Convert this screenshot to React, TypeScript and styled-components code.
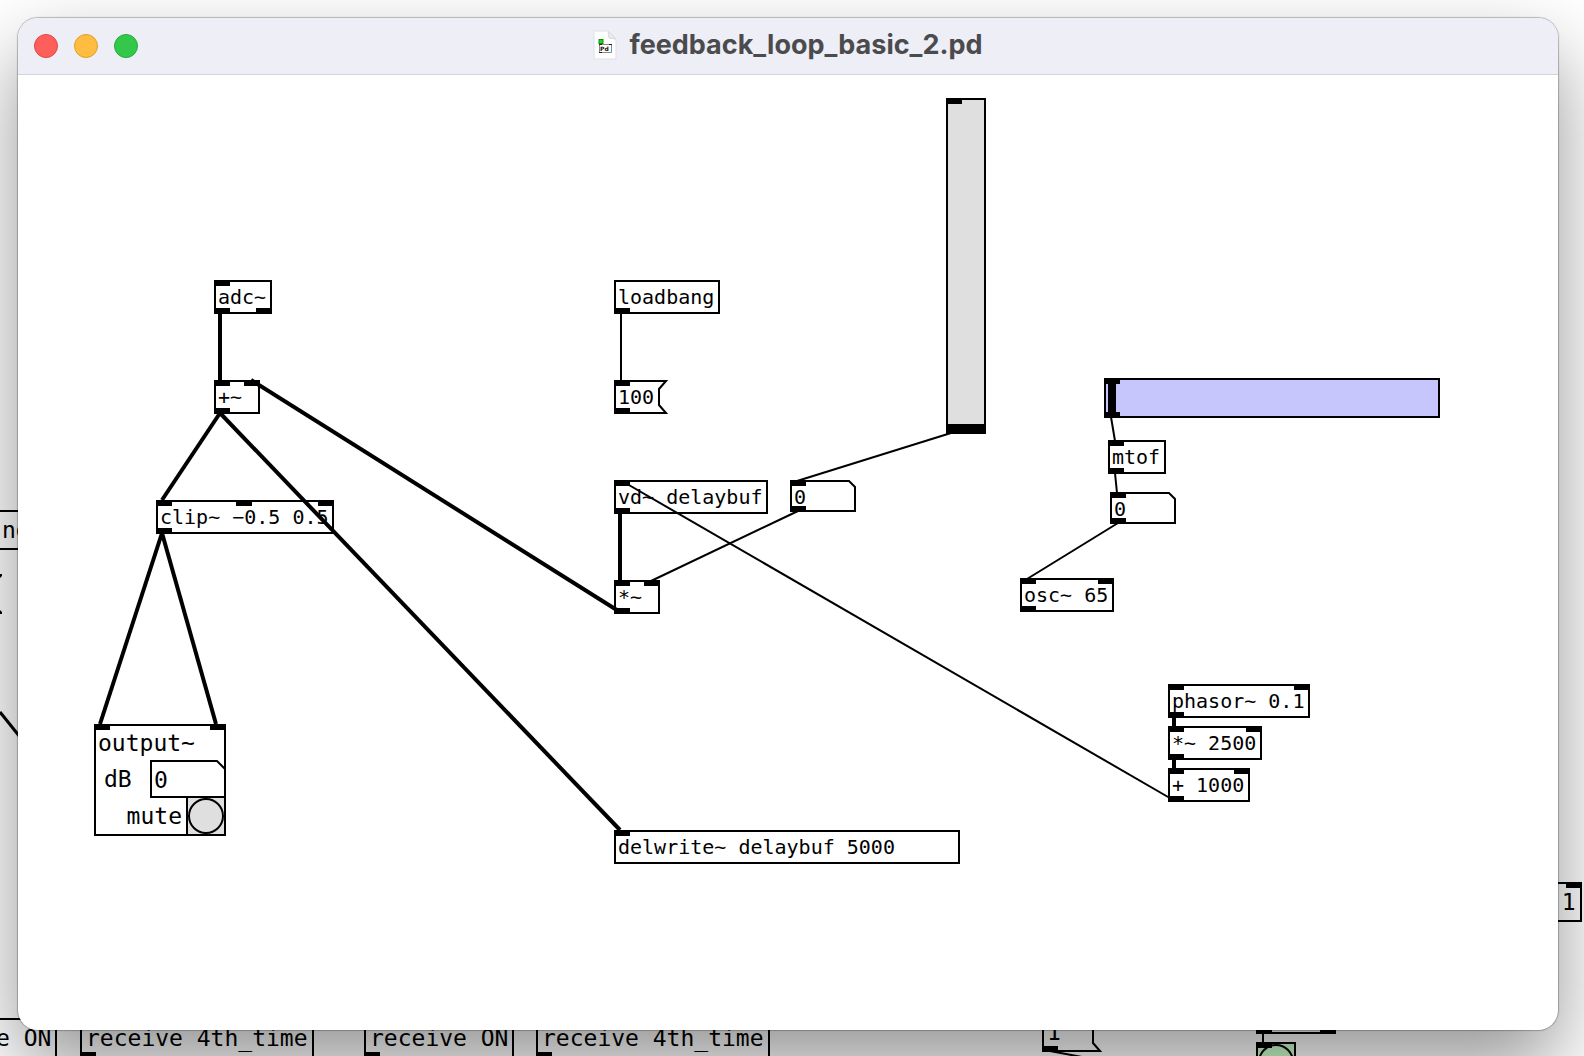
import React from 'react';
import styled, { createGlobalStyle, css } from 'styled-components';

const GlobalStyle = createGlobalStyle`
  *, *::before, *::after { box-sizing: border-box; }
  body { margin: 0; background: #fff; }
  button, input { margin: 0; padding: 0; border: 0; border-radius: 0; background: none; color: inherit; font: inherit; }
`;

const MONO = '"DejaVu Sans Mono", "Liberation Mono", monospace';

type Place = { x: number; y: number };
type Size = { w: number; h: number };

const placed = css<{ $x: number; $y: number }>`
  position: absolute;
  left: ${(p) => p.$x}px;
  top: ${(p) => p.$y}px;
`;

const Desktop = styled.div`
  position: relative;
  display: flex;
  min-height: 100vh;
  padding: 18px 26px 26px 18px;
  overflow: hidden;
  background: #fff;
  color: #000;
  font-family: ${MONO};
  font-size: 23px;
  line-height: 36px;
`;

const Backdrop = styled.div`
  position: absolute;
  inset: 0;
  overflow: hidden;
`;

const Window = styled.main`
  position: relative;
  flex: 1;
  display: flex;
  flex-direction: column;
  border-radius: 20px;
  background: #fff;
  box-shadow: 0 0 1px 1px rgba(0, 0, 0, 0.25), 0 36px 80px rgba(0, 0, 0, 0.42);
  overflow: hidden;
`;

const TitleBar = styled.header`
  display: grid;
  grid-template-columns: 1fr auto 1fr;
  align-items: center;
  height: 57px;
  padding: 0 16px;
  border-bottom: 1px solid #d4d4d9;
  background: #eeeef7;
`;

const Lights = styled.div`
  display: flex;
  gap: 16px;
`;

const Light = styled.button<{ $fill: string; $edge: string }>`
  width: 24px;
  height: 24px;
  border: 1px solid ${(p) => p.$edge};
  border-radius: 50%;
  background: ${(p) => p.$fill};
`;

const Title = styled.h1`
  display: flex;
  align-items: center;
  gap: 12px;
  margin: 0;
  padding-bottom: 2px;
  color: #4b4b4d;
  font: 700 27px/32px Inter, "Liberation Sans", sans-serif;
`;

const Canvas = styled.section`
  position: relative;
  flex: 1;
  font-size: 20px;
  line-height: 30px;
`;

const Cords = styled.svg`
  position: absolute;
  inset: 0;
  width: 100%;
  height: 100%;
  pointer-events: none;
`;

const ObjectBox = styled.div<{ $x: number; $y: number; $w: number; $large?: boolean }>`
  ${placed}
  width: ${(p) => p.$w}px;
  height: ${(p) => (p.$large ? 40 : 34)}px;
  padding: 0 ${(p) => (p.$large ? 4 : 2)}px;
  border: 2px solid #000;
  white-space: pre;
`;

const Port = styled.i<{ $x: number; $bottom?: boolean }>`
  position: absolute;
  left: ${(p) => p.$x}px;
  ${(p) => (p.$bottom ? 'bottom: 0;' : 'top: 0;')}
  width: 16px;
  height: 6px;
  background: #000;
  pointer-events: none;
`;

/* Ports of a bordered box hang on this frame, which covers the border too. */
const PortFrame = styled.span`
  position: absolute;
  inset: -2px;
  pointer-events: none;
`;

const Outline = styled.svg`
  position: absolute;
  inset: 0;
  width: 100%;
  height: 100%;
  fill: none;
  stroke: #000;
  stroke-width: 2;
  pointer-events: none;
`;

const Message = styled.button<{ $x: number; $y: number; $w: number }>`
  ${placed}
  width: ${(p) => p.$w}px;
  height: 34px;
  padding: 2px 0 2px 4px;
  text-align: left;
  line-height: 30px;
`;

const NumberFrame = styled.span<{ $w: number; $h: number }>`
  position: relative;
  display: block;
  width: ${(p) => p.$w}px;
  height: ${(p) => p.$h}px;
`;

const NumberInput = styled.input`
  display: block;
  width: 100%;
  height: 100%;
  padding: 2px 8px 0 4px;
  outline: none;
`;

const Placed = styled.div<{ $x: number; $y: number }>`
  ${placed}
`;

const SliderFrame = styled.div<{ $x: number; $y: number; $w: number; $h: number; $fill: string }>`
  ${placed}
  width: ${(p) => p.$w}px;
  height: ${(p) => p.$h}px;
  border: 2px solid #000;
  background: ${(p) => p.$fill};
`;

const Range = styled.input<{ $vertical?: boolean }>`
  display: block;
  width: 100%;
  height: 100%;
  appearance: none;
  outline: none;
  ${(p) => (p.$vertical ? 'writing-mode: vertical-lr; direction: rtl;' : 'padding: 0 2px;')}

  &::-webkit-slider-thumb {
    appearance: none;
    width: ${(p) => (p.$vertical ? 36 : 8)}px;
    height: ${(p) => (p.$vertical ? 8 : 36)}px;
    border: 0;
    border-radius: 0;
    background: #000;
  }
`;

const OutputBox = styled.div<{ $x: number; $y: number }>`
  ${placed}
  display: flex;
  flex-direction: column;
  width: 132px;
  font-size: 23px;

  &::after {
    content: '';
    position: absolute;
    inset: 0;
    border: 2px solid #000;
    pointer-events: none;
  }
`;

const OutputName = styled.div`
  height: 36px;
  padding: 2px 0 0 4px;
  line-height: 34px;
`;

const OutputLevel = styled.div`
  display: flex;
  justify-content: space-between;
  height: 36px;
  padding-left: 10px;
  line-height: 38px;
`;

const OutputMute = styled.div`
  display: flex;
  justify-content: flex-end;
  gap: 4px;
  height: 40px;
  line-height: 40px;
`;

const Bang = styled.button<{ $fill: string }>`
  display: block;
  width: 40px;
  height: 40px;
  border: 2px solid #000;
  background: ${(p) => p.$fill};

  &::before {
    content: '';
    display: block;
    width: 36px;
    height: 36px;
    border: 2px solid #000;
    border-radius: 50%;
  }
`;

type ObjProps = Place & { w: number; large?: boolean; text: string; ins?: number[]; outs?: number[] };

function Obj({ x, y, w, large, text, ins = [], outs = [] }: ObjProps) {
  return (
    <ObjectBox $x={x} $y={y} $w={w} $large={large}>
      {text}
      <PortFrame>
        {ins.map((p) => <Port key={`i${p}`} $x={p} />)}
        {outs.map((p) => <Port key={`o${p}`} $x={p} $bottom />)}
      </PortFrame>
    </ObjectBox>
  );
}

function NumberBox({ w, h, cut, label, id, ports = true }: Size & { cut: number; label?: string; id?: string; ports?: boolean }) {
  return (
    <NumberFrame $w={w} $h={h}>
      <NumberInput id={id} aria-label={label} defaultValue="0" inputMode="decimal" />
      <Outline>
        <path d={`M1 1H${w - cut}L${w - 1} ${cut}V${h - 1}H1Z`} />
      </Outline>
      {ports && <Port $x={0} />}
      {ports && <Port $x={0} $bottom />}
    </NumberFrame>
  );
}

function PdFileIcon() {
  return (
    <svg width="24" height="30" viewBox="0 0 24 30" aria-hidden="true">
      <path d="M1 1H15L23 9V29H1Z" fill="#fff" stroke="#dfdfe5" strokeWidth="1" />
      <path d="M15 1L16 8L23 9Z" fill="#ececf0" stroke="#d8d8de" strokeWidth="1" />
      <rect x="6" y="9.500" width="4" height="4" fill="#0ee015" stroke="#178a1b" />
      <path d="M6.500 14.500H18.500V22.500H6.500Z" fill="none" stroke="#8a8a8a" />
      <path d="M6 14.500h3M16 14.500h3M6 22.500h3" stroke="#222" strokeWidth="1" />
      <text x="7" y="21" fontFamily="DejaVu Sans, sans-serif" fontWeight="700" fontSize="6" fill="#111">Pd</text>
    </svg>
  );
}

const backgroundObjects: ObjProps[] = [
  { x: -4, y: 510, w: 60, text: 'ng' },
  { x: -10, y: 1018, w: 67, text: 'e ON' },
  { x: 80, y: 1018, w: 234, text: 'receive 4th_time', outs: [0] },
  { x: 364, y: 1018, w: 150, text: 'receive ON', outs: [0] },
  { x: 536, y: 1018, w: 234, text: 'receive 4th_time', outs: [0] },
  { x: 1542, y: 882, w: 40, text: ' 1', ins: [24] },
  { x: 1256, y: 994, w: 80, text: '', outs: [0, 64] },
];

const objects: ObjProps[] = [
  { x: 196, y: 205, w: 58, text: 'adc~', ins: [0], outs: [0, 42] },
  { x: 196, y: 305, w: 46, text: '+~', ins: [0, 30], outs: [0] },
  { x: 138, y: 425, w: 178, text: 'clip~ \u22120.5 0.5', ins: [0, 80, 162], outs: [0] },
  { x: 596, y: 205, w: 106, text: 'loadbang', outs: [0] },
  { x: 596, y: 405, w: 154, text: 'vd~ delaybuf', ins: [0], outs: [0] },
  { x: 596, y: 505, w: 46, text: '*~', ins: [0, 30], outs: [0] },
  { x: 596, y: 755, w: 346, text: 'delwrite~ delaybuf 5000', ins: [0] },
  { x: 1090, y: 365, w: 58, text: 'mtof', ins: [0], outs: [0] },
  { x: 1002, y: 503, w: 94, text: 'osc~ 65', ins: [0, 78], outs: [0] },
  { x: 1150, y: 609, w: 142, text: 'phasor~ 0.1', ins: [0, 126], outs: [0] },
  { x: 1150, y: 651, w: 94, text: '*~ 2500', ins: [0, 78], outs: [0] },
  { x: 1150, y: 693, w: 82, text: '+ 1000', ins: [0, 66], outs: [0] },
];

const signalCords = [
  [202, 238, 202, 306],
  [202, 338, 144, 425],
  [202, 338, 602, 755],
  [602, 537, 233, 305],
  [144, 458, 82, 649],
  [144, 458, 198, 649],
  [602, 438, 602, 506],
  [1156, 642, 1156, 652],
  [1156, 684, 1156, 694],
];

const controlCords = [
  [603, 238, 603, 306],
  [933, 358, 779, 406],
  [780, 436, 633, 506],
  [604, 406, 1157, 726],
  [1093, 342, 1097, 366],
  [1097, 398, 1099, 418],
  [1100, 448, 1009, 504],
];

function Cord({ ends, width }: { ends: number[]; width: number }) {
  const [x1, y1, x2, y2] = ends;
  return <line x1={x1} y1={y1} x2={x2} y2={y2} stroke="#000" strokeWidth={width} />;
}

export default function App() {
  return (
    <>
      <GlobalStyle />
      <Desktop>
        <Backdrop>
          {backgroundObjects.map((o) => <Obj key={o.x} {...o} large />)}
          <Placed $x={1047} $y={1014}>1</Placed>
          <Placed $x={1256} $y={1042}>
            <Bang $fill="#ccffcc" aria-label="Bang" />
            <Port $x={0} />
          </Placed>
          <Cords>
            <g fill="none" stroke="#000" strokeWidth="2">
              <path d="M0 712L20 737" strokeWidth="3" />
              <path d="M1043 1012V1051H1100L1093 1043V1012" />
              <path d="M1050 1051L1082 1057M1263 1034V1042" />
            </g>
            <rect x="1042" y="1046" width="16" height="6" />
            <path d="M0 574h2v2l-2 2zM0 610l2 2v2h-2z" />
          </Cords>
        </Backdrop>

        <Window>
          <TitleBar>
            <Lights>
              <Light $fill="#fe5f5b" $edge="#e2463f" aria-label="Close" />
              <Light $fill="#febc40" $edge="#dfa023" aria-label="Minimize" />
              <Light $fill="#34c84a" $edge="#24ab35" aria-label="Zoom" />
            </Lights>
            <Title>
              <PdFileIcon />
              feedback_loop_basic_2.pd
            </Title>
          </TitleBar>

          <Canvas>
            {objects.map((o) => <Obj key={o.text} {...o} />)}

            <Message $x={596} $y={305} $w={54}>
              <Outline>
                <path d="M1 1H52L45 9V25L52 33H1Z" />
              </Outline>
              100
              <Port $x={0} />
              <Port $x={0} $bottom />
            </Message>

            <Placed $x={772} $y={405}>
              <NumberBox w={66} h={32} cut={7} label="Feedback gain" />
            </Placed>
            <Placed $x={1092} $y={417}>
              <NumberBox w={66} h={32} cut={7} label="Frequency" />
            </Placed>

            <SliderFrame $x={928} $y={23} $w={40} $h={336} $fill="#dfdfdf">
              <Range type="range" $vertical defaultValue={0} aria-label="Feedback slider" />
              <PortFrame>
                <Port $x={0} />
                <Port $x={0} $bottom />
              </PortFrame>
            </SliderFrame>
            <SliderFrame $x={1086} $y={303} $w={336} $h={40} $fill="#c6c6fd">
              <Range type="range" defaultValue={0} aria-label="Pitch slider" />
              <PortFrame>
                <Port $x={0} />
                <Port $x={0} $bottom />
              </PortFrame>
            </SliderFrame>

            <OutputBox $x={76} $y={649}>
              <OutputName>output~</OutputName>
              <OutputLevel>
                <label htmlFor="level">dB</label>
                <NumberBox id="level" w={76} h={38} cut={9} ports={false} />
              </OutputLevel>
              <OutputMute>
                <label htmlFor="mute">mute</label>
                <Bang id="mute" $fill="#dfdfdf" />
              </OutputMute>
              <Port $x={0} />
              <Port $x={116} />
            </OutputBox>

            <Cords>
              {signalCords.map((c) => <Cord key={c.join()} ends={c} width={4} />)}
              {controlCords.map((c) => <Cord key={c.join()} ends={c} width={2} />)}
            </Cords>
          </Canvas>
        </Window>
      </Desktop>
    </>
  );
}
